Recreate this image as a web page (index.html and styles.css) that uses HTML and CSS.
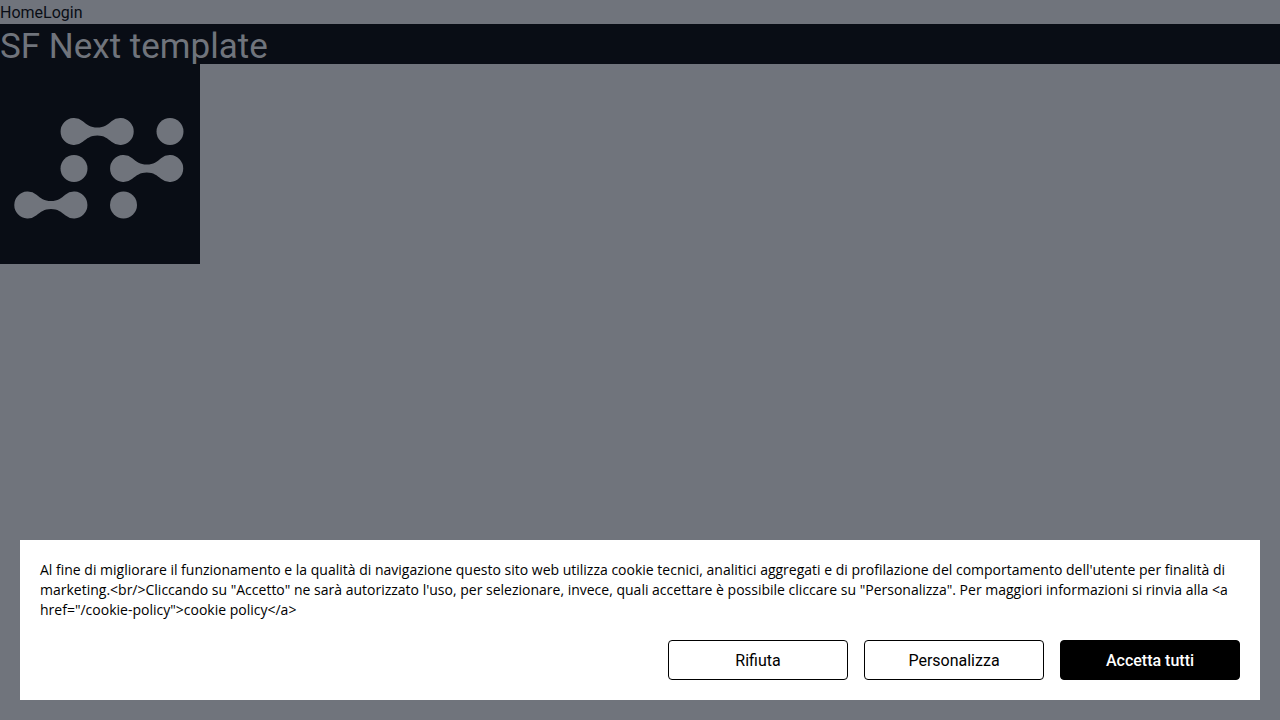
FILE: index.html
```html
<!DOCTYPE html>
<html lang="it">
<head>
<meta charset="utf-8">
<title>SF Next template</title>
<link rel="stylesheet" href="styles.css">
</head>
<body>
<header>
<nav class="nav"><a href="#">Home</a><a href="#">Login</a></nav>
</header>
<main>
<h1 class="title">SF Next template</h1>
<svg class="logo" viewBox="0 0 200 200" role="img" aria-label="Logo">
<rect class="logo-bg" width="200" height="200"/>
<defs>
<path id="link" d="M8.800 -10.300C13 -7 16.500 -4 23.300 -4S33.500 -7 37.500 -10.300A13.500 13.500 0 1 1 37.500 10.300C33.500 7 30 4 23.300 4S13 7 8.800 10.300A13.500 13.500 0 1 1 8.800 -10.300Z"/>
</defs>
<use href="#link" x="74" y="67.500"/>
<circle cx="170" cy="67.500" r="13.500"/>
<circle cx="74" cy="104.500" r="13.500"/>
<use href="#link" x="123.500" y="104.500"/>
<use href="#link" x="27.700" y="141"/>
<circle cx="123.500" cy="141" r="13.500"/>
</svg>
</main>
<div class="overlay">
<section class="banner" role="dialog" aria-label="Cookie">
<p class="message">Al fine di migliorare il funzionamento e la qualità di navigazione questo sito web utilizza cookie tecnici, analitici aggregati e di profilazione del comportamento dell'utente per finalità di marketing.&lt;br/&gt;Cliccando su "Accetto" ne sarà autorizzato l'uso, per selezionare, invece, quali accettare è possibile cliccare su "Personalizza". Per maggiori informazioni si rinvia alla &lt;a <span class="markup">href="/cookie-policy"&gt;cookie</span> policy&lt;/a&gt;</p>
<div class="actions">
<button class="button" type="button">Rifiuta</button>
<button class="button" type="button">Personalizza</button>
<button class="button primary" type="button">Accetta tutti</button>
</div>
</section>
</div>
</body>
</html>
```
FILE: styles.css
```css
* { box-sizing: border-box; }
body { margin: 0; background: #70747c; color: #090d15; font: 16px/22px Roboto, sans-serif; }
.nav { display: flex; padding-top: 2px; }
.nav a { color: inherit; text-decoration: none; }
.title { margin: 0; padding-top: 6px; background: #090d15; color: #70747c; font-size: 35px; line-height: 34px; font-weight: 400; }
.logo { display: block; width: 200px; height: 200px; fill: #70747c; }
.logo-bg { fill: #090d15; }
.overlay { position: fixed; inset: 0; display: flex; align-items: flex-end; padding: 20px; }
.banner { flex: 1; display: flex; flex-direction: column; gap: 20px; padding: 20px; background: #fff; color: #000; }
.message { margin: 0; font-family: "Open Sans", sans-serif; font-size: 14px; line-height: 20px; }
.markup { white-space: nowrap; }
.actions { display: flex; justify-content: flex-end; gap: 16px; }
.button { width: 180px; height: 40px; padding: 2px 0 0; border: 1px solid #000; border-radius: 4px; background: #fff; color: #000; font: inherit; cursor: pointer; }
.primary { background: #000; color: #fff; font-weight: 500; }
```
